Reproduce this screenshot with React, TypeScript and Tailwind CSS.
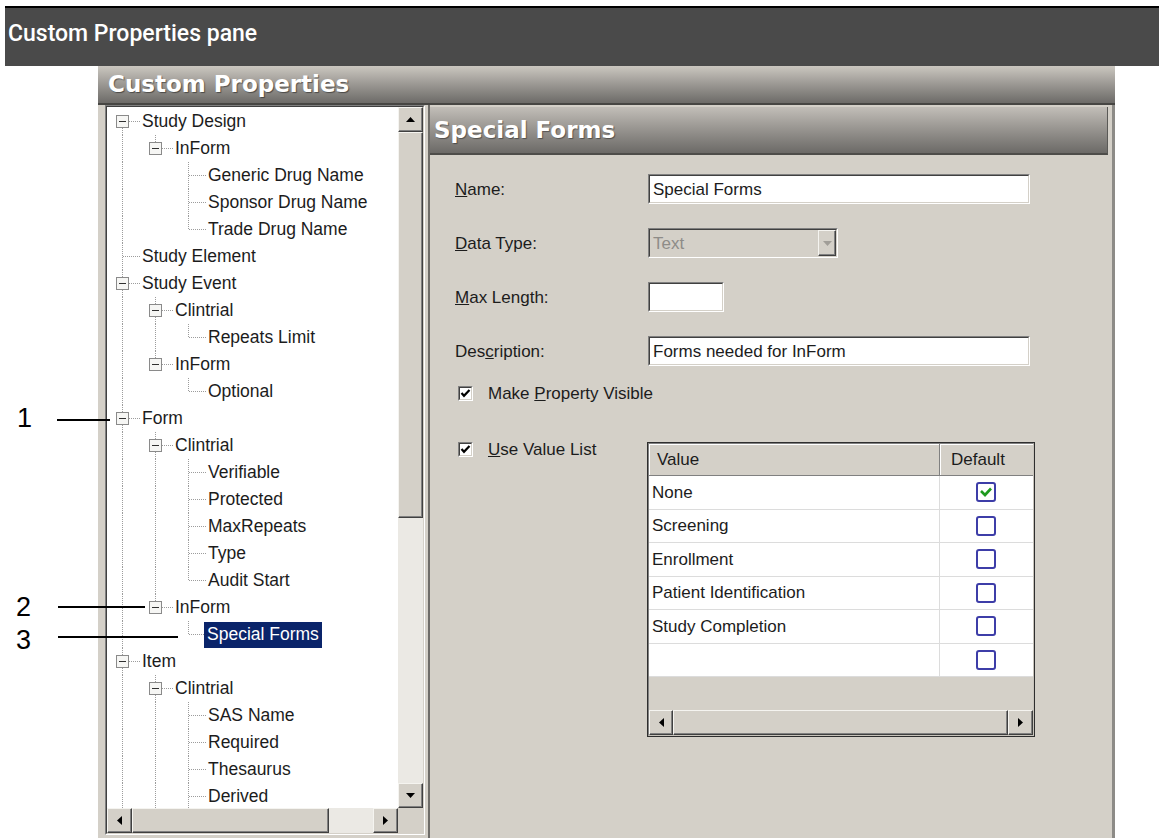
import React from 'react';

type TreeNode = { label: string; level: number; open?: boolean; selected?: boolean };

const TREE: TreeNode[] = [
  { label: 'Study Design', level: 0, open: true },
  { label: 'InForm', level: 1, open: true },
  { label: 'Generic Drug Name', level: 2 },
  { label: 'Sponsor Drug Name', level: 2 },
  { label: 'Trade Drug Name', level: 2 },
  { label: 'Study Element', level: 0 },
  { label: 'Study Event', level: 0, open: true },
  { label: 'Clintrial', level: 1, open: true },
  { label: 'Repeats Limit', level: 2 },
  { label: 'InForm', level: 1, open: true },
  { label: 'Optional', level: 2 },
  { label: 'Form', level: 0, open: true },
  { label: 'Clintrial', level: 1, open: true },
  { label: 'Verifiable', level: 2 },
  { label: 'Protected', level: 2 },
  { label: 'MaxRepeats', level: 2 },
  { label: 'Type', level: 2 },
  { label: 'Audit Start', level: 2 },
  { label: 'InForm', level: 1, open: true },
  { label: 'Special Forms', level: 2, selected: true },
  { label: 'Item', level: 0, open: true },
  { label: 'Clintrial', level: 1, open: true },
  { label: 'SAS Name', level: 2 },
  { label: 'Required', level: 2 },
  { label: 'Thesaurus', level: 2 },
  { label: 'Derived', level: 2 },
];

const ROW = 27;
const CELL = 33;
const MX = 15.5;
const MY = 13.5;
const DOT = '#9c9c9c';

// true when another node at this level follows before the branch closes
// (the list keeps going past the visible part, so running off the end counts)
function hasNext(i: number, level: number) {
  for (let j = i + 1; j < TREE.length; j++) {
    if (TREE[j].level < level) return false;
    if (TREE[j].level === level) return true;
  }
  return true;
}

function Connector({ up, down, across, box }: { up: boolean; down: boolean; across: boolean; box: boolean }) {
  return (
    <svg width={CELL} height={ROW} className="block shrink-0" shapeRendering="crispEdges">
      {up && <line x1={MX} y1={0} x2={MX} y2={MY} stroke={DOT} strokeDasharray="1 1" />}
      {down && <line x1={MX} y1={MY} x2={MX} y2={ROW} stroke={DOT} strokeDasharray="1 1" />}
      {across && <line x1={MX} y1={MY} x2={CELL} y2={MY} stroke={DOT} strokeDasharray="1 1" />}
      {box && (
        <g>
          <rect x={9.5} y={7.5} width={12} height={12} fill="#f6f6f4" stroke="#8a8a8a" />
          <line x1={12} y1={MY} x2={19} y2={MY} stroke="#303030" strokeWidth={1.4} />
        </g>
      )}
    </svg>
  );
}

function TreeRow({ node, index }: { node: TreeNode; index: number }) {
  const guides = [];
  for (let k = 0; k < node.level; k++) {
    const cont = hasNext(index, k);
    guides.push(<Connector key={k} up={cont} down={cont} across={false} box={false} />);
  }
  guides.push(
    <Connector key="own" up={index > 0} down={hasNext(index, node.level)} across box={!!node.open} />
  );
  return (
    <div className="flex items-center h-[27px] shrink-0">
      {guides}
      {node.selected ? (
        <span className="ml-[-2px] px-[3px] h-[26px] flex items-center bg-[#0a246a] text-white whitespace-nowrap">
          {node.label}
        </span>
      ) : (
        <span className="ml-[2px] text-[#1c1c1c] whitespace-nowrap">{node.label}</span>
      )}
    </div>
  );
}

const RAISED =
  'bg-[#d4d0c8] border border-t-[#f5f4f0] border-l-[#f5f4f0] border-r-[#404040] border-b-[#404040] shadow-[inset_-1px_-1px_0_#808080]';

function Tri({ dir, color = '#000' }: { dir: 'up' | 'down' | 'left' | 'right'; color?: string }) {
  const vertical = dir === 'up' || dir === 'down';
  const pts = {
    up: '0,5 9,5 4.5,0',
    down: '0,0 9,0 4.5,5',
    left: '5,0 5,9 0,4.5',
    right: '0,0 0,9 5,4.5',
  }[dir];
  return (
    <svg width={vertical ? 9 : 5} height={vertical ? 5 : 9} className="block">
      <polygon points={pts} fill={color} />
    </svg>
  );
}

function ArrowBtn({ dir, className }: { dir: 'up' | 'down' | 'left' | 'right'; className: string }) {
  return (
    <div className={`${RAISED} ${className} flex items-center justify-center shrink-0`}>
      <Tri dir={dir} />
    </div>
  );
}

function Sunken({ className, inner, children }: { className: string; inner: string; children?: React.ReactNode }) {
  return (
    <div className={`border border-t-[#808080] border-l-[#808080] border-r-white border-b-white shrink-0 ${className}`}>
      <div
        className={`h-full w-full border border-t-[#404040] border-l-[#404040] border-r-[#d4d0c8] border-b-[#d4d0c8] ${inner}`}
      >
        {children}
      </div>
    </div>
  );
}

function Check({ checked }: { checked: boolean }) {
  return (
    <Sunken className="w-[15px] h-[15px]" inner="bg-white flex items-center justify-center">
      {checked && (
        <svg width="11" height="11" viewBox="0 0 11 11" className="block">
          <polyline points="1.5,5 4,7.8 9.5,2" fill="none" stroke="#000" strokeWidth="2.2" />
        </svg>
      )}
    </Sunken>
  );
}

function GridCheck({ checked }: { checked: boolean }) {
  return (
    <div className="w-[20px] h-[20px] rounded-[3px] border-2 border-[#3d3da8] bg-white flex items-center justify-center">
      {checked && (
        <svg width="14" height="12" viewBox="0 0 14 12" className="block">
          <polyline points="2,5 6,9 12,2.5" fill="none" stroke="#1f9a1f" strokeWidth="2.6" />
        </svg>
      )}
    </div>
  );
}

const VALUES = ['None', 'Screening', 'Enrollment', 'Patient Identification', 'Study Completion', ''];

function ValueGrid() {
  return (
    <div className="w-[388px] h-[295px] border border-[#2e2e2e] shrink-0">
      <div className="h-full w-full border border-t-[#808080] border-l-[#808080] border-r-[#c8c4bc] border-b-[#c8c4bc] flex flex-col bg-[#d4d0c8]">
        <div className="flex h-[32px] shrink-0 border-b border-[#808080]">
          <div className="w-[291px] h-full flex items-center pl-[8px] border-r border-r-[#808080] shadow-[inset_1px_1px_0_#fff]">
            Value
          </div>
          <div className="flex-1 h-full flex items-center pl-[11px] shadow-[inset_1px_1px_0_#fff]">Default</div>
        </div>
        {VALUES.map((v, i) => (
          <div key={i} className="flex h-[33.5px] shrink-0 bg-white border-b border-[#dcdcdc]">
            <div className="w-[291px] h-full flex items-center pl-[3px] border-r border-r-[#dcdcdc]">{v}</div>
            <div className="flex-1 h-full flex items-center pl-[36px]">
              <GridCheck checked={i === 0} />
            </div>
          </div>
        ))}
        <div className="flex-1" />
        <div className="flex h-[25px] shrink-0">
          <ArrowBtn dir="left" className="w-[24px] h-full" />
          <div className={`${RAISED} flex-1 h-full`} />
          <ArrowBtn dir="right" className="w-[25px] h-full" />
        </div>
      </div>
    </div>
  );
}

function FieldRow({ label, children }: { label: React.ReactNode; children: React.ReactNode }) {
  return (
    <div className="flex items-center h-[30px]">
      <div className="w-[193px] shrink-0">{label}</div>
      {children}
    </div>
  );
}

export default function App() {
  return (
    <div className="w-[1159px] h-[838px] bg-white relative overflow-hidden font-['Liberation_Sans',Arial,sans-serif]">
      {/* caption band */}
      <div className="mt-[6px] ml-[5px] h-[60px] border-t-2 border-black bg-[#4a4a4a] pl-[3px] pt-[14px] text-white text-[23px] leading-[23px] font-medium font-['Roboto',sans-serif]">
        Custom Properties pane
      </div>

      {/* dialog */}
      <div className="ml-[98px] w-[1017px] flex flex-col">
        <div className="h-[39px] border-b-2 border-[#474643] bg-linear-to-b from-[#cbc7c0] to-[#6d6b68] flex items-center pl-[10px] text-white text-[23px] font-bold font-['DejaVu_Sans',sans-serif] [text-shadow:1px_1px_1px_rgba(0,0,0,0.45)]">
          Custom Properties
        </div>

        <div className="h-[733px] bg-[#d4d0c8] flex pl-[7px]">
          {/* tree pane */}
          <div className="w-[320px] h-[730px] border border-t-[#808080] border-l-[#808080] border-r-white border-b-white shrink-0">
            <div className="w-full h-full border border-t-[#404040] border-l-[#404040] border-r-[#d4d0c8] border-b-[#d4d0c8] flex flex-col">
              <div className="flex h-[701px] shrink-0">
                <div className="w-[291px] h-full bg-white overflow-hidden pt-[1px] flex flex-col text-[17.5px] leading-none">
                  {TREE.map((n, i) => (
                    <TreeRow key={i} node={n} index={i} />
                  ))}
                </div>
                <div className="w-[25px] h-full flex flex-col bg-[#ebe9e4]">
                  <ArrowBtn dir="up" className="w-full h-[25px]" />
                  <div className={`${RAISED} w-full h-[386px] shrink-0`} />
                  <div className="flex-1" />
                  <ArrowBtn dir="down" className="w-full h-[25px]" />
                </div>
              </div>
              <div className="flex h-[25px] shrink-0">
                <div className="w-[291px] h-full flex bg-[#ebe9e4]">
                  <ArrowBtn dir="left" className="w-[25px] h-full" />
                  <div className={`${RAISED} w-[197px] h-full shrink-0`} />
                  <div className="flex-1" />
                  <ArrowBtn dir="right" className="w-[25px] h-full" />
                </div>
                <div className="flex-1 bg-[#d4d0c8]" />
              </div>
            </div>
          </div>

          <div className="w-[3px] shrink-0" />

          {/* property pane */}
          <div className="w-[687px] h-full shrink-0 border-l-2 border-l-[#6e6c68] border-r-[3px] border-r-[#8d8b87] pt-[2px] flex flex-col text-[17px] text-[#1c1c1c] leading-none">
            <div className="h-[48px] mr-[4px] shrink-0 border-b-2 border-b-[#4e4d4a] border-r border-r-[#5a5956] bg-linear-to-b from-[#c2beb8] to-[#6c6a67] flex items-center pl-[4px] text-white text-[23px] font-bold font-['DejaVu_Sans',sans-serif] [text-shadow:1px_1px_1px_rgba(0,0,0,0.4)]">
              Special Forms
            </div>

            <div className="pl-[25px] pt-[19px] flex flex-col">
              <div className="flex flex-col gap-[24px]">
                <FieldRow
                  label={
                    <span>
                      <span className="underline">N</span>ame:
                    </span>
                  }
                >
                  <Sunken className="w-[382px] h-[30px]" inner="bg-white flex items-center pl-[3px]">
                    Special Forms
                  </Sunken>
                </FieldRow>
                <FieldRow
                  label={
                    <span>
                      <span className="underline">D</span>ata Type:
                    </span>
                  }
                >
                  <Sunken className="w-[190px] h-[30px]" inner="bg-[#d4d0c8] flex items-center">
                    <span className="flex-1 pl-[3px] text-[#8e8c88]">Text</span>
                    <div className={`${RAISED} w-[18px] h-full flex items-center justify-center shrink-0`}>
                      <Tri dir="down" color="#a19e98" />
                    </div>
                  </Sunken>
                </FieldRow>
                <FieldRow
                  label={
                    <span>
                      <span className="underline">M</span>ax Length:
                    </span>
                  }
                >
                  <Sunken className="w-[76px] h-[30px]" inner="bg-white" />
                </FieldRow>
                <FieldRow
                  label={
                    <span>
                      Des<span className="underline">c</span>ription:
                    </span>
                  }
                >
                  <Sunken className="w-[382px] h-[30px]" inner="bg-white flex items-center pl-[3px]">
                    Forms needed for InForm
                  </Sunken>
                </FieldRow>
              </div>

              <div className="mt-[17px] h-[20px] flex items-center pl-[3px] gap-[15px]">
                <Check checked />
                <span>
                  Make <span className="underline">P</span>roperty Visible
                </span>
              </div>

              <div className="mt-[36px] flex items-start">
                <div className="w-[192px] h-[20px] shrink-0 flex items-center pl-[3px] gap-[15px]">
                  <Check checked />
                  <span>
                    <span className="underline">U</span>se Value List
                  </span>
                </div>
                <div className="mt-[3px]">
                  <ValueGrid />
                </div>
              </div>
            </div>
          </div>
        </div>
      </div>

      {/* numbered callouts */}
      <div className="absolute left-[17px] top-[405px] text-[27px] leading-[26px] text-black">1</div>
      <div className="absolute left-[57px] top-[419px] w-[53px] h-[2px] bg-black" />
      <div className="absolute left-[16px] top-[594px] text-[27px] leading-[26px] text-black">2</div>
      <div className="absolute left-[58px] top-[606px] w-[87px] h-[2px] bg-black" />
      <div className="absolute left-[16px] top-[627px] text-[27px] leading-[26px] text-black">3</div>
      <div className="absolute left-[58px] top-[636px] w-[120px] h-[2px] bg-black" />
    </div>
  );
}
